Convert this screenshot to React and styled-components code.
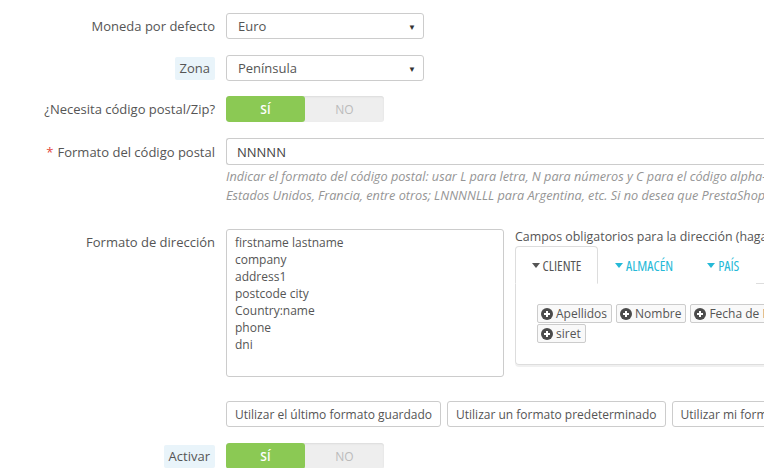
import React from 'react';
import styled, { createGlobalStyle } from 'styled-components';

const GlobalStyle = createGlobalStyle`
  html, body {
    margin: 0;
    padding: 0;
    background: #fff;
    overflow: hidden;
  }
  body {
    font-family: 'Open Sans', 'Liberation Sans', sans-serif;
    font-size: 13px;
    color: #555;
  }
`;

const Page = styled.div`
  width: 1000px;
  padding-top: 13px;
`;

const FormGroup = styled.div`
  display: grid;
  grid-template-columns: 226px 1fr;
  margin-bottom: ${(p) => p.$mb ?? 16}px;
`;

const Label = styled.div`
  text-align: right;
  padding-right: 11px;
  padding-top: ${(p) => p.$pt ?? 4}px;
  line-height: 18px;
  color: #555;
  white-space: nowrap;
`;

const Hint = styled.span`
  display: inline-block;
  background: #e9f4fa;
  padding: 2px 5px 3px;
  border-radius: 2px;
`;

const Required = styled.span`
  color: #e3473b;
  margin-right: 4px;
`;

const Field = styled.div`
  display: flex;
  flex-direction: column;
  min-width: 0;
`;

const Select = styled.div`
  width: 198px;
  height: 26px;
  box-sizing: border-box;
  border: 1px solid #ccc;
  border-radius: 3px;
  display: flex;
  align-items: center;
  justify-content: space-between;
  padding: 0 7px 0 11px;
  color: #555;

  .caret {
    font-size: 8px;
    color: #333;
  }
`;

const Switch = styled.div`
  width: 158px;
  height: 26px;
  display: flex;
  border-radius: 3px;
  overflow: hidden;
  background: #eee;
  box-shadow: inset 0 1px 2px rgba(0, 0, 0, 0.08);
`;

const SwitchOption = styled.div`
  flex: 1;
  display: flex;
  align-items: center;
  justify-content: center;
  font-size: 12px;
  font-weight: ${(p) => (p.$on ? 600 : 400)};
  color: ${(p) => (p.$on ? '#fff' : '#bbb')};
  background: ${(p) => (p.$on ? '#8bc954' : 'transparent')};
  border-radius: 3px;
`;

const TextInput = styled.div`
  height: 27px;
  box-sizing: border-box;
  border: 1px solid #ccc;
  border-right: none;
  border-radius: 3px 0 0 3px;
  display: flex;
  align-items: center;
  padding-left: 10px;
  color: #444;
`;

const HelpBlock = styled.p`
  margin: 2px 0 0;
  font-size: 12.7px;
  font-style: italic;
  line-height: 19px;
  color: #959595;
  white-space: nowrap;
`;

const AddressRow = styled.div`
  display: flex;
  gap: 11px;
  align-items: flex-start;
`;

const TextArea = styled.div`
  width: 278px;
  height: 148px;
  flex-shrink: 0;
  box-sizing: border-box;
  border: 1px solid #ccc;
  border-radius: 3px;
  padding: 4px 8px;
  font-size: 12px;
  line-height: 17px;
  color: #555;
`;

const FieldsPanel = styled.div`
  flex: 1;
`;

const PanelTitle = styled.div`
  font-size: 12.4px;
  line-height: 16px;
  margin-bottom: 1px;
  white-space: nowrap;
`;

const Tabs = styled.div`
  display: flex;
  height: 38px;
  border-bottom: 1px solid #ddd;
  box-sizing: border-box;
`;

const Tab = styled.div`
  display: flex;
  align-items: center;
  gap: 3px;
  padding: 0 ${(p) => (p.$active ? 13 : 16)}px;
  min-width: ${(p) => (p.$active ? 83 : 0)}px;
  box-sizing: border-box;
  justify-content: center;
  font-size: 14px;
  font-weight: 400;
  font-stretch: 75%;
  text-transform: uppercase;
  color: ${(p) => (p.$active ? '#555' : '#25b9d7')};
  background: #fff;
  border: 1px solid ${(p) => (p.$active ? '#ddd' : 'transparent')};
  border-bottom-color: ${(p) => (p.$active ? '#fff' : 'transparent')};
  border-radius: 4px 4px 0 0;
  margin-bottom: -1px;
`;

const Caret = styled.span`
  width: 0;
  height: 0;
  border-left: 4px solid transparent;
  border-right: 4px solid transparent;
  border-top: 5px solid currentColor;
`;

const TabContent = styled.div`
  height: 81px;
  box-sizing: border-box;
  border: 1px solid #ddd;
  border-top: none;
  border-radius: 0 0 4px 4px;
  box-shadow: 0 2px 0 rgba(0, 0, 0, 0.06);
  padding: 20px 0 0 21px;
  display: flex;
  flex-wrap: wrap;
  align-content: flex-start;
  gap: 1px 4px;
  width: 320px;
`;

const FieldButton = styled.div`
  height: 19px;
  box-sizing: border-box;
  border: 1px solid #ccc;
  border-radius: 2px;
  background: #f9f9f9;
  display: flex;
  align-items: center;
  gap: 3px;
  padding: 0 4px 0 3px;
  font-size: 12px;
  color: #555;
  white-space: nowrap;
`;

const ButtonRow = styled.div`
  display: flex;
  gap: 6px;
`;

const Button = styled.div`
  height: 26px;
  box-sizing: border-box;
  border: 1px solid #ccc;
  border-radius: 3px;
  background: #fff;
  display: flex;
  align-items: center;
  padding: 0 8px;
  font-size: 12px;
  color: #555;
  white-space: nowrap;
`;

const PlusIcon = () => (
  <svg width="12" height="12" viewBox="0 0 12 12">
    <circle cx="6" cy="6" r="6" fill="#4a4a4a" />
    <path d="M6 3v6M3 6h6" stroke="#fff" strokeWidth="2" />
  </svg>
);

const Toggle = () => (
  <Switch>
    <SwitchOption $on>SÍ</SwitchOption>
    <SwitchOption>NO</SwitchOption>
  </Switch>
);

const addressLines = ['firstname lastname', 'company', 'address1', 'postcode city', 'Country:name', 'phone', 'dni'];
const fields = ['Apellidos', 'Nombre', 'Fecha de Nacimiento', 'siret'];

export default function App() {
  return (
    <Page>
      <GlobalStyle />
      <FormGroup>
        <Label>Moneda por defecto</Label>
        <Field>
          <Select>
            Euro<span className="caret">▼</span>
          </Select>
        </Field>
      </FormGroup>
      <FormGroup $mb={15}>
        <Label $pt={2}>
          <Hint>Zona</Hint>
        </Label>
        <Field>
          <Select>
            Península<span className="caret">▼</span>
          </Select>
        </Field>
      </FormGroup>
      <FormGroup>
        <Label>¿Necesita código postal/Zip?</Label>
        <Field>
          <Toggle />
        </Field>
      </FormGroup>
      <FormGroup $mb={24}>
        <Label $pt={5}>
          <Required>*</Required>Formato del código postal
        </Label>
        <Field>
          <TextInput>NNNNN</TextInput>
          <HelpBlock>
            Indicar el formato del código postal: usar L para letra, N para números y C para el código alpha-2 del país. Ej. NNNNN para España,
            <br />
            Estados Unidos, Francia, entre otros; LNNNNLLL para Argentina, etc. Si no desea que PrestaShop verifique el formato, déjelo en blanco.
          </HelpBlock>
        </Field>
      </FormGroup>
      <FormGroup $mb={24}>
        <Label>Formato de dirección</Label>
        <AddressRow>
          <TextArea>
            {addressLines.map((l) => (
              <div key={l}>{l}</div>
            ))}
          </TextArea>
          <FieldsPanel>
            <PanelTitle>Campos obligatorios para la dirección (haga clic para más información)</PanelTitle>
            <Tabs>
              <Tab $active>
                <Caret />
                Cliente
              </Tab>
              <Tab>
                <Caret />
                Almacén
              </Tab>
              <Tab>
                <Caret />
                País
              </Tab>
            </Tabs>
            <TabContent>
              {fields.map((f) => (
                <FieldButton key={f}>
                  <PlusIcon />
                  {f}
                </FieldButton>
              ))}
            </TabContent>
          </FieldsPanel>
        </AddressRow>
      </FormGroup>
      <FormGroup>
        <div />
        <ButtonRow>
          <Button>Utilizar el último formato guardado</Button>
          <Button>Utilizar un formato predeterminado</Button>
          <Button>Utilizar mi formato actual</Button>
        </ButtonRow>
      </FormGroup>
      <FormGroup>
        <Label $pt={2}>
          <Hint>Activar</Hint>
        </Label>
        <Field>
          <Toggle />
        </Field>
      </FormGroup>
    </Page>
  );
}
